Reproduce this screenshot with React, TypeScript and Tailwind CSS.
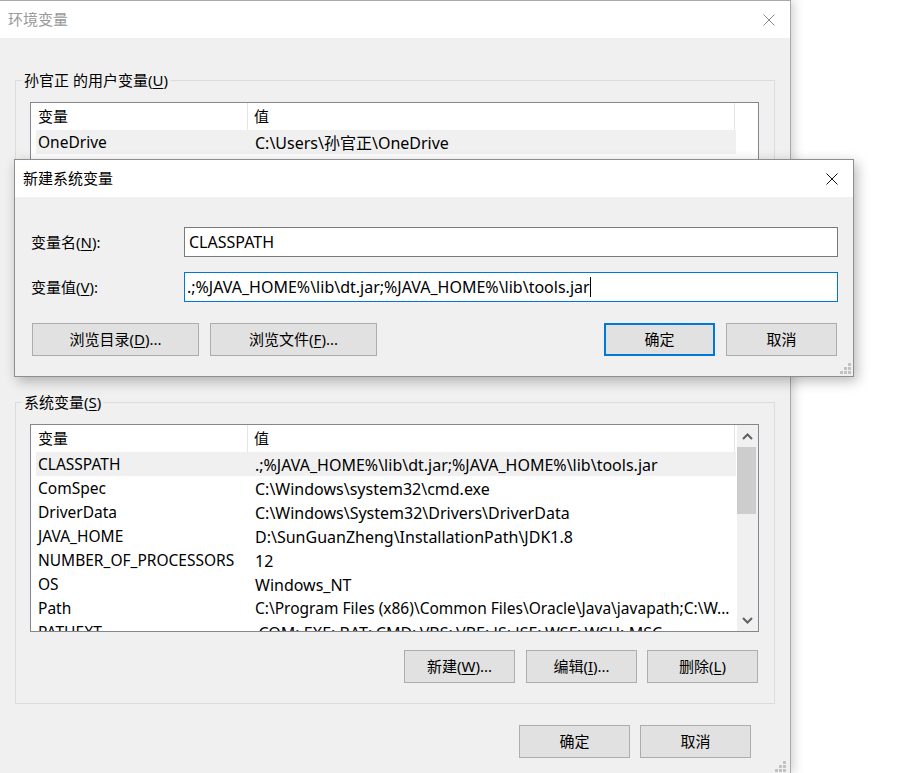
import React from 'react';

const FONT = "font-['Noto_Sans','Noto_Sans_CJK_SC',sans-serif]";

const systemRows: Array<[string, string]> = [
    ['CLASSPATH', '.;%JAVA_HOME%\\lib\\dt.jar;%JAVA_HOME%\\lib\\tools.jar'],
    ['ComSpec', 'C:\\Windows\\system32\\cmd.exe'],
    ['DriverData', 'C:\\Windows\\System32\\Drivers\\DriverData'],
    ['JAVA_HOME', 'D:\\SunGuanZheng\\InstallationPath\\JDK1.8'],
    ['NUMBER_OF_PROCESSORS', '12'],
    ['OS', 'Windows_NT'],
    ['Path', 'C:\\Program Files (x86)\\Common Files\\Oracle\\Java\\javapath;C:\\W...'],
    ['PATHEXT', '.COM;.EXE;.BAT;.CMD;.VBS;.VBE;.JS;.JSE;.WSF;.WSH;.MSC'],
];

const userRows: Array<[string, string]> = [
    ['OneDrive', 'C:\\Users\\孙官正\\OneDrive'],
];

function Key({ k }: { k: string }) {
    return <span className="underline underline-offset-2">{k}</span>;
}

function CloseIcon({ color }: { color: string }) {
    return (
        <svg width="12" height="12" viewBox="0 0 12 12">
            <path d="M0.5 0.5 L11.5 11.5 M11.5 0.5 L0.5 11.5" stroke={color} strokeWidth="1" fill="none" />
        </svg>
    );
}

function Grip() {
    return (
        <svg width="11" height="11" viewBox="0 0 11 11">
            <g fill="#c2c2c2">
                <rect x="8" y="0" width="3" height="3" />
                <rect x="4" y="4" width="3" height="3" />
                <rect x="8" y="4" width="3" height="3" />
                <rect x="0" y="8" width="3" height="3" />
                <rect x="4" y="8" width="3" height="3" />
                <rect x="8" y="8" width="3" height="3" />
            </g>
        </svg>
    );
}

function Btn({ children, w, primary }: { children: React.ReactNode; w: string; primary?: boolean }) {
    return (
        <div
            className={`${w} h-[33px] flex items-center justify-center bg-[#e1e1e1] text-black ${
                primary ? 'border-2 border-[#0078d7]' : 'border border-[#adadad]'
            }`}
        >
            {children}
        </div>
    );
}

function Chevron({ up }: { up?: boolean }) {
    return (
        <svg width="11" height="7" viewBox="0 0 11 7">
            <polyline
                points={up ? '1,6 5.5,1.5 10,6' : '1,1 5.5,5.5 10,1'}
                stroke="#606060"
                strokeWidth="2"
                fill="none"
            />
        </svg>
    );
}

function ListView({ rows, scroll }: { rows: Array<[string, string]>; scroll?: boolean }) {
    return (
        <div className="w-[729px] h-[208px] border border-[#828790] bg-white flex overflow-hidden">
            <div className="w-[706px] flex flex-col overflow-hidden">
                {/* header */}
                <div className="h-[27px] flex shrink-0">
                    <div className="w-[217px] pl-[7px] flex items-center border-r border-[#e5e5e5]">变量</div>
                    <div className="w-[487px] pl-[6px] flex items-center border-r border-[#e5e5e5]">值</div>
                </div>
                {rows.map(([name, value], i) => (
                    <div
                        key={name}
                        className={`h-[24px] shrink-0 ml-[5px] w-[700px] flex items-center pt-[1px] whitespace-nowrap text-[15.5px] ${
                            i === 0 ? 'bg-[#f0f0f0]' : ''
                        }`}
                    >
                        <div className="w-[212px] pl-[2px] overflow-hidden">{name}</div>
                        <div className={`flex-1 pl-[7px] overflow-hidden ${name === 'Path' ? 'text-[15.5px]' : 'text-[16px]'}`}>
                            {value}
                        </div>
                    </div>
                ))}
            </div>
            {scroll && (
                <div className="w-[21px] bg-[#f0f0f0] flex flex-col items-center">
                    <div className="h-[22px] w-full flex items-center justify-center">
                        <Chevron up />
                    </div>
                    <div className="w-[19px] h-[67px] bg-[#cdcdcd] self-start" />
                    <div className="flex-1" />
                    <div className="h-[22px] w-full flex items-center justify-center">
                        <Chevron />
                    </div>
                </div>
            )}
        </div>
    );
}

function Group({ label, h, children }: { label: React.ReactNode; h: string; children: React.ReactNode }) {
    return (
        <div className={`relative ${h} border border-[#dcdcdc] pt-[21px] pl-[14px]`}>
            <div className="absolute -top-[12px] left-[6px] px-[2px] bg-[#f0f0f0] leading-[22px]">{label}</div>
            {children}
        </div>
    );
}

export default function App() {
    return (
        <div className={`relative w-[903px] h-[773px] bg-white overflow-hidden text-[15px] text-black ${FONT}`}>
            {/* Environment variables window */}
            <div className="w-[791px] h-[773px] border-t border-r border-[#a9a9a9] bg-[#f0f0f0] flex flex-col shadow-[3px_0_10px_rgba(0,0,0,0.18)]">
                <div className="h-[37px] shrink-0 bg-white flex items-center justify-between pl-[8px] pr-[15px]">
                    <span className="text-[#9a9a9a]">环境变量</span>
                    <CloseIcon color="#8a8a8a" />
                </div>
                <div className="flex flex-col px-[15px] pt-[42px]">
                    <Group label={<>孙官正 的用户变量(<Key k="U" />)</>} h="h-[283px]">
                        <ListView rows={userRows} />
                        <div className="flex justify-end gap-[11px] pr-[16px] mt-[18px]">
                            <Btn w="w-[111px]">新建(<Key k="N" />)...</Btn>
                            <Btn w="w-[111px]">编辑(<Key k="E" />)...</Btn>
                            <Btn w="w-[111px]">删除(<Key k="D" />)</Btn>
                        </div>
                    </Group>
                    <div className="mt-[39px]">
                        <Group label={<>系统变量(<Key k="S" />)</>} h="h-[302px]">
                            <ListView rows={systemRows} scroll />
                            <div className="flex justify-end pr-[16px] mt-[18px]">
                                <Btn w="w-[111px]">新建(<Key k="W" />)...</Btn>
                                <div className="w-[11px]" />
                                <Btn w="w-[111px]">编辑(<Key k="I" />)...</Btn>
                                <div className="w-[10px]" />
                                <Btn w="w-[111px]">删除(<Key k="L" />)</Btn>
                            </div>
                        </Group>
                    </div>
                    <div className="flex justify-end gap-[10px] pr-[24px] mt-[21px]">
                        <Btn w="w-[111px]">确定</Btn>
                        <Btn w="w-[111px]">取消</Btn>
                    </div>
                </div>
                <div className="flex justify-end pr-[4px] mt-auto pb-[1px]">
                    <Grip />
                </div>
            </div>

            {/* New system variable dialog */}
            <div className="absolute left-[14px] top-[159px] w-[840px] h-[218px] border border-[#8e8e8e] bg-[#f0f0f0] flex flex-col shadow-[3px_4px_12px_rgba(0,0,0,0.28)]">
                <div className="h-[37px] shrink-0 bg-white flex items-center justify-between pl-[8px] pr-[15px]">
                    <span>新建系统变量</span>
                    <CloseIcon color="#111111" />
                </div>
                <div className="relative flex-1 flex flex-col pl-[16px] pr-[15px] pt-[30px]">
                    <div className="flex items-center h-[30px]">
                        <div className="w-[153px]">变量名(<Key k="N" />):</div>
                        <div className="flex-1 h-[30px] border border-[#7a7a7a] bg-white flex items-center pl-[4px] text-[16px]">
                            CLASSPATH
                        </div>
                    </div>
                    <div className="flex items-center h-[30px] mt-[15px]">
                        <div className="w-[153px]">变量值(<Key k="V" />):</div>
                        <div className="flex-1 h-[30px] border border-[#0078d7] bg-white flex items-center pl-[2px] whitespace-nowrap text-[16px]">
                            <span>.;%JAVA_HOME%\lib\dt.jar;%JAVA_HOME%\lib\tools.jar</span>
                            <span className="w-px h-[20px] bg-black" />
                        </div>
                    </div>
                    <div className="flex items-center mt-[21px] pl-[1px] pr-[1px]">
                        <Btn w="w-[167px]">浏览目录(<Key k="D" />)...</Btn>
                        <div className="w-[11px]" />
                        <Btn w="w-[167px]">浏览文件(<Key k="F" />)...</Btn>
                        <div className="flex-1" />
                        <Btn w="w-[111px]" primary>确定</Btn>
                        <div className="w-[11px]" />
                        <Btn w="w-[111px]">取消</Btn>
                    </div>
                    <div className="absolute right-[2px] bottom-[2px]">
                        <Grip />
                    </div>
                </div>
            </div>
        </div>
    );
}
